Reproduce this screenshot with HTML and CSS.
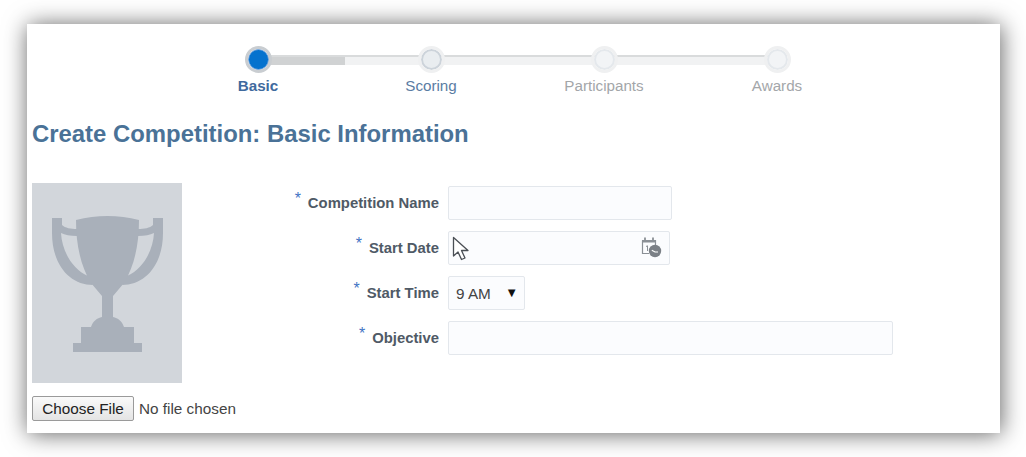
FILE: index.html
```html
<!DOCTYPE html>
<html lang="en">
<head>
    <meta charset="UTF-8">
    <meta name="viewport" content="width=device-width, initial-scale=1.0">
    <title>Create Competition</title>
    <link rel="stylesheet" href="styles.css">
</head>
<body>

<div class="card">
    <div class="train">
        <div class="train-track"><div class="train-progress"></div></div>
        <div class="step step-active">
            <span class="step-dot"></span>
            <span class="step-label">Basic</span>
        </div>
        <div class="step step-next">
            <span class="step-dot"></span>
            <span class="step-label">Scoring</span>
        </div>
        <div class="step">
            <span class="step-dot"></span>
            <span class="step-label">Participants</span>
        </div>
        <div class="step">
            <span class="step-dot"></span>
            <span class="step-label">Awards</span>
        </div>
    </div>

    <h1 class="title">Create Competition: Basic Information</h1>

    <div class="content">
        <div class="picture">
            <div class="trophy-box">
                <svg class="trophy" width="150" height="200" viewBox="0 0 150 200">
                    <!-- handles -->
                    <path d="M20 35H30V42C33 45 39 46 45 46V53C38 53 33 52 29 50C30 68 40 86 56 93L61 102C38 102 20 82 20 50Z"/>
                    <path d="M131 35H121V42C118 45 112 46 106 46V53C113 53 118 52 122 50C121 68 111 86 95 93L90 102C113 102 131 82 131 50Z"/>
                    <!-- cup, stem and base -->
                    <path d="M44 37Q75.500 29 107 37C107 60 103 82 92 100L81 113V134C86 135 90 138 92 144H102V160H110V169H41V160H49V144H59C61 138 65 135 70 134V113L59 100C48 82 44 60 44 37Z"/>
                </svg>
            </div>
            <input class="file-input" type="file">
        </div>

        <div class="form">
            <div class="row">
                <label class="field-label" for="name"><span class="req">*</span>Competition Name</label>
                <input class="field field-name" id="name" type="text">
            </div>
            <div class="row">
                <label class="field-label" for="date"><span class="req">*</span>Start Date</label>
                <div class="date-wrap">
                    <input class="field field-date" id="date" type="text">
                    <!-- mouse pointer caught in the screenshot -->
                    <svg class="pointer" width="18" height="25" viewBox="0 0 18 25">
                        <path d="M1.500 1.500V20L6 16L9.500 23.500L13 22L9.500 14.500H16Z" fill="#fff" stroke="#4a4f55" stroke-width="1.300" stroke-linejoin="round"/>
                    </svg>
                    <svg class="cal-icon" width="22" height="22" viewBox="0 0 22 22">
                        <path d="M2.500 4.500H15.500V10M9 17.500H2.500V4.500" fill="none" stroke="#8b9096" stroke-width="1.200"/>
                        <path d="M2 4H16V6.500H2Z" fill="#8b9096"/>
                        <path d="M5 1.500V5M13 1.500V5" stroke="#8b9096" stroke-width="1.800"/>
                        <path d="M6 10.500L7.500 9.800V15" fill="none" stroke="#8b9096" stroke-width="1"/>
                        <circle cx="15" cy="15" r="6.200" fill="#7b8086"/>
                        <path d="M11.800 14.200L15 16H18" fill="none" stroke="#fff" stroke-width="1.100"/>
                    </svg>
                </div>
            </div>
            <div class="row">
                <label class="field-label" for="time"><span class="req">*</span>Start Time</label>
                <div class="select-wrap">
                    <select class="field field-time" id="time">
                        <option>9 AM</option>
                        <option>10 AM</option>
                    </select>
                </div>
            </div>
            <div class="row">
                <label class="field-label" for="objective"><span class="req">*</span>Objective</label>
                <input class="field field-objective" id="objective" type="text">
            </div>
        </div>
    </div>
</div>

</body>
</html>
```

FILE: styles.css
```css
body {
    font-family: "Liberation Sans", Arial, sans-serif;
    margin: 0;
    padding: 24px 26px 24px 27px;
    background: #fff;
    overflow: hidden;
}
.card {
    height: 409px;
    padding: 22px 0 0 5px;
    box-sizing: border-box;
    background: #fff;
    box-shadow: 1px 1px 22px rgba(0, 0, 0, 0.62);
}
.train {
    position: relative;
    display: grid;
    grid-template-columns: repeat(4, 173px);
    width: 692px;
    margin-left: 139.500px;
}
.train-track {
    position: absolute;
    top: 9px;
    left: 86px;
    width: 519px;
    height: 10px;
    box-sizing: border-box;
    border-top: 2px solid #d9dbdc;
    background: #f1f2f3;
}
.train-progress {
    width: 87px;
    height: 8px;
    background: #d0d2d3;
}
.step {
    position: relative;
    display: flex;
    flex-direction: column;
    align-items: center;
}
.step-dot {
    width: 17px;
    height: 17px;
    border: 2px solid #e4e8ec;
    outline: 3px solid #eff0f1;
    border-radius: 50%;
    background: #f2f4f6;
    margin: 3px 0;
}
.step-active .step-dot {
    width: 19px;
    height: 19px;
    margin: 3px 0;
    border: 1px solid #6fa4e0;
    outline: 3px solid #c9cdd1;
    background: #0572ce;
}
.step-next .step-dot {
    border-color: #ccd3da;
    background: #e9edf0;
}
.step-label {
    margin-top: 3px;
    font-size: 15.200px;
    line-height: 20px;
    color: #a3a6a9;
}
.step-active .step-label {
    font-weight: bold;
    color: #3f6a9e;
}
.step-next .step-label {
    color: #5a7ca3;
}
.title {
    margin: 23px 0 0;
    font-size: 23.900px;
    line-height: 30px;
    font-weight: bold;
    color: #4a7297;
}
.content {
    display: flex;
    margin-top: 34px;
}
.picture {
    width: 150px;
}
.trophy-box {
    width: 150px;
    height: 200px;
    background: #d2d6db;
}
.trophy {
    display: block;
    fill: #a9b0ba;
}
.file-input {
    display: block;
    width: 240px;
    margin-top: 13px;
    font-family: "Liberation Sans", Arial, sans-serif;
    font-size: 15.300px;
    color: #444;
}
.file-input::file-selector-button {
    width: 102px;
    height: 25px;
    margin-right: 5px;
    padding: 0;
    font: inherit;
    color: #222;
    border: 1px solid #9a9a9a;
    border-radius: 2px;
    background: linear-gradient(#fafafa, #e4e4e4);
}
.form {
    display: flex;
    flex-direction: column;
    gap: 11px;
    padding-top: 3px;
}
.row {
    display: flex;
    align-items: center;
    gap: 9px;
    height: 34px;
}
.field-label {
    width: 257px;
    text-align: right;
    font-size: 14.850px;
    font-weight: bold;
    color: #4f5a66;
}
.req {
    position: relative;
    top: -4px;
    margin-right: 7px;
    font-weight: normal;
    font-size: 16px;
    color: #3f74c4;
}
.field {
    display: block;
    height: 34px;
    box-sizing: border-box;
    padding: 0 7px;
    border: 1px solid #e3e7ec;
    border-radius: 2px;
    background: #fbfcfe;
    font-family: "Liberation Sans", Arial, sans-serif;
    font-size: 15.300px;
    color: #444;
}
.field-name {
    width: 224px;
}
.field-date {
    width: 222px;
}
.field-time {
    width: 77px;
    appearance: none;
}
.field-objective {
    width: 445px;
}
.date-wrap,
.select-wrap {
    position: relative;
}
.select-wrap::after {
    content: "▼";
    position: absolute;
    top: 10px;
    right: 7px;
    font-size: 13px;
    line-height: 14px;
    color: #111;
    pointer-events: none;
}
.pointer {
    position: absolute;
    top: 5px;
    left: 4px;
}
.cal-icon {
    position: absolute;
    top: 5px;
    right: 8px;
}
```
